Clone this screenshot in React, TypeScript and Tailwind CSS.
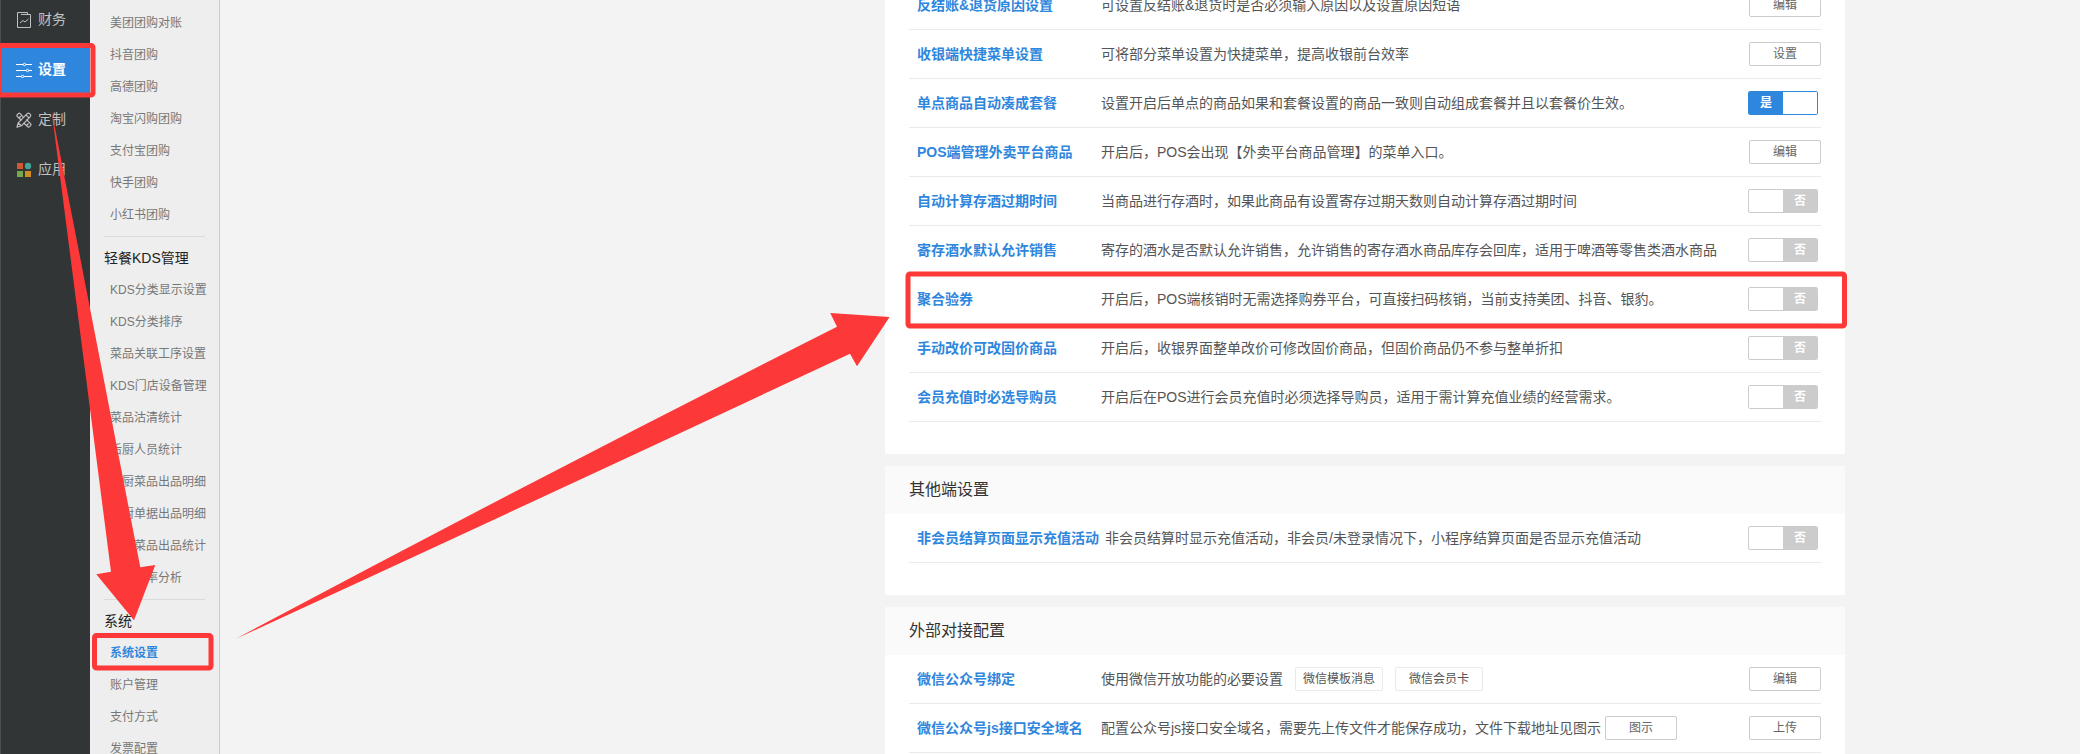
import type { ReactNode } from 'react';

type NavItem = { label: string; icon: ReactNode; active?: boolean };
type MenuGroup = { title?: string; items: string[] };
type Setting = {
  name: string;
  desc: string;
  action?: string;
  on?: boolean;
  tags?: string[];
  inlineAction?: string;
};
type Section = { title?: string; settings: Setting[] };

const navItems: NavItem[] = [
  {
    label: '财务',
    icon: (
      <svg viewBox="0 -1 16 18" className="w-4 h-[18px]" fill="none" stroke="currentColor">
        <path d="M11.5 3.5V1.5h-10v15h13V3.5H5" />
        <path d="M4 12l3-2.5 2 1.5 3.5-3" />
      </svg>
    ),
  },
  {
    label: '设置',
    active: true,
    icon: (
      <svg viewBox="0 -1 16 18" className="w-4 h-[18px]" fill="none" stroke="currentColor">
        <path d="M0 3.5h7M10 3.5h6M0 9.5h10M13 9.5h3M0 15.5h5M8 15.5h8" />
        <circle cx="8.5" cy="3.5" r="1.2" />
        <circle cx="11.5" cy="9.5" r="1.2" />
        <circle cx="6.5" cy="15.5" r="1.2" />
      </svg>
    ),
  },
  {
    label: '定制',
    icon: (
      <svg
        viewBox="0 -1 16 18"
        className="w-4 h-[18px]"
        fill="none"
        stroke="currentColor"
        strokeWidth="1.2"
        strokeLinejoin="round"
        strokeLinecap="round"
      >
        <path d="M7.2 6.2L4.2 2.6Q3.3 1.8 2.4 2.6L1.3 3.7Q.6 4.6 1.4 5.5L5 9M10.8 8.8l3.9 4q.6.8 0 1.6l-1.2 1.3q-.9.7-1.7 0L8 12.2M3.2 6.8l1.4-1.3M11 14l1.3-1.2" />
        <path d="M1 16.2l1.2-4.4L11.2 2.6q1.2-1 2.3 0l.8.8q.9 1.1 0 2.2L5.4 14.8zM2.4 12l2.8 2.7M10 3.9l3 3" />
      </svg>
    ),
  },
  {
    label: '应用',
    icon: (
      <svg viewBox="0 -1 16 18" className="w-4 h-[18px]">
        <rect x="1" y="2" width="6" height="6" fill="#d4572f" />
        <circle cx="12" cy="5" r="3.2" fill="#45a596" />
        <rect x="1" y="10" width="6" height="6" fill="#74aa48" />
        <rect x="9" y="10" width="6" height="6" fill="#d18c24" />
      </svg>
    ),
  },
];

const menuGroups: MenuGroup[] = [
  {
    items: ['美团团购对账', '抖音团购', '高德团购', '淘宝闪购团购', '支付宝团购', '快手团购', '小红书团购'],
  },
  {
    title: '轻餐KDS管理',
    items: [
      'KDS分类显示设置',
      'KDS分类排序',
      '菜品关联工序设置',
      'KDS门店设备管理',
      '菜品沽清统计',
      '后厨人员统计',
      '后厨菜品出品明细',
      '后厨单据出品明细',
      '后厨菜品出品统计',
      '出品效率分析',
    ],
  },
  {
    title: '系统',
    items: ['系统设置', '账户管理', '支付方式', '发票配置'],
  },
];

const sections: Section[] = [
  {
    settings: [
      { name: '反结账&退货原因设置', desc: '可设置反结账&退货时是否必须输入原因以及设置原因短语', action: '编辑' },
      { name: '收银端快捷菜单设置', desc: '可将部分菜单设置为快捷菜单，提高收银前台效率', action: '设置' },
      { name: '单点商品自动凑成套餐', desc: '设置开启后单点的商品如果和套餐设置的商品一致则自动组成套餐并且以套餐价生效。', on: true },
      { name: 'POS端管理外卖平台商品', desc: '开启后，POS会出现【外卖平台商品管理】的菜单入口。', action: '编辑' },
      { name: '自动计算存酒过期时间', desc: '当商品进行存酒时，如果此商品有设置寄存过期天数则自动计算存酒过期时间', on: false },
      { name: '寄存酒水默认允许销售', desc: '寄存的酒水是否默认允许销售，允许销售的寄存酒水商品库存会回库，适用于啤酒等零售类酒水商品', on: false },
      { name: '聚合验券', desc: '开启后，POS端核销时无需选择购券平台，可直接扫码核销，当前支持美团、抖音、银豹。', on: false },
      { name: '手动改价可改固价商品', desc: '开启后，收银界面整单改价可修改固价商品，但固价商品仍不参与整单折扣', on: false },
      { name: '会员充值时必选导购员', desc: '开启后在POS进行会员充值时必须选择导购员，适用于需计算充值业绩的经营需求。', on: false },
    ],
  },
  {
    title: '其他端设置',
    settings: [
      { name: '非会员结算页面显示充值活动', desc: '非会员结算时显示充值活动，非会员/未登录情况下，小程序结算页面是否显示充值活动', on: false },
    ],
  },
  {
    title: '外部对接配置',
    settings: [
      { name: '微信公众号绑定', desc: '使用微信开放功能的必要设置', tags: ['微信模板消息', '微信会员卡'], action: '编辑' },
      { name: '微信公众号js接口安全域名', desc: '配置公众号js接口安全域名，需要先上传文件才能保存成功，文件下载地址见图示', inlineAction: '图示', action: '上传' },
    ],
  },
];

const ActionButton = ({ children }: { children: ReactNode }) => (
  <button
    type="button"
    className="w-[72px] h-6 shrink-0 rounded-xs border border-[#ccc] bg-white text-xs leading-[22px] text-[#666]"
  >
    {children}
  </button>
);

const Toggle = ({ name, on }: { name: string; on: boolean }) => (
  <label className="group relative flex w-[70px] h-6 shrink-0 mr-[3px] overflow-hidden rounded-xs border border-[#ccc] bg-white text-xs font-bold text-white leading-[22px] text-center cursor-pointer has-checked:border-[#2f86dd]">
    <input type="checkbox" defaultChecked={on} aria-label={name} className="sr-only" />
    <span className="flex-1 group-has-checked:bg-[#2f86dd]">{on ? '是' : ''}</span>
    <span className="flex-1 bg-[#ccc] group-has-checked:bg-white">{on ? '' : '否'}</span>
  </label>
);

const SettingRow = ({ setting }: { setting: Setting }) => (
  <li className="flex items-center h-[49px] pl-2 border-b border-[#eaeaea]">
    <a href="#" className="min-w-[178px] mr-1.5 font-bold text-[#2f86dd] whitespace-nowrap">
      {setting.name}
    </a>
    <span className="text-[#555] whitespace-nowrap">{setting.desc}</span>
    {setting.tags && (
      <div className="flex gap-3 ml-3">
        {setting.tags.map((tag) => (
          <button
            key={tag}
            type="button"
            className="w-[88px] h-6 rounded-xs border border-[#eaeaea] text-xs leading-[22px] text-[#555]"
          >
            {tag}
          </button>
        ))}
      </div>
    )}
    {setting.inlineAction && (
      <div className="flex ml-1">
        <ActionButton>{setting.inlineAction}</ActionButton>
      </div>
    )}
    <div className="flex ml-auto">
      {setting.action ? (
        <ActionButton>{setting.action}</ActionButton>
      ) : (
        <Toggle name={setting.name} on={Boolean(setting.on)} />
      )}
    </div>
  </li>
);

// Red boxes and arrows that walk the reader through the steps
const Annotations = () => (
  <svg
    width="2080"
    height="754"
    viewBox="0 0 2080 754"
    className="absolute top-0 left-0 max-w-none pointer-events-none"
    aria-hidden="true"
  >
    <g fill="none" stroke="#fc3838" strokeWidth="5">
      <rect x="-0.5" y="45.5" width="93.5" height="49.5" rx="2" />
      <rect x="94.5" y="635.5" width="116.5" height="32.5" rx="2" />
      <rect x="908" y="274" width="936.5" height="52" rx="2" />
    </g>
    <g fill="#fc3838">
      <path d="M51.5 110L140.3 567.3L155.3 565L134 620.3L96.3 574.3L111 571.7Z" />
      <path d="M236 638.7Q535 479 837 326.7L830.2 313L889.6 317L857 366.3L850 353.7Q544 497 236 638.7Z" />
    </g>
  </svg>
);

const App = () => {
  return (
    <div className="relative flex h-screen overflow-hidden bg-[#f3f3f3] text-sm font-['Liberation_Sans','Noto_Sans_CJK_SC',sans-serif]">
      {/* Primary nav */}
      <nav className="w-[90px] shrink-0 border-l border-[#4a4e50] bg-[#313536] -mt-1.5">
        {navItems.map((item) => (
          <a
            key={item.label}
            href="#"
            className={`flex items-center gap-1.5 h-[50px] pl-[15px] ${
              item.active ? 'bg-[#2f86dd] font-bold text-white' : 'text-[#c0c1c1]'
            }`}
          >
            {item.icon}
            {item.label}
          </a>
        ))}
      </nav>

      {/* Secondary menu */}
      <aside className="w-[130px] shrink-0 px-3.5 pt-[7px] border-r border-[#ccc] bg-[#eee]">
        {menuGroups.map((group, index) => (
          <div key={index} className={index > 0 ? 'mt-[5px] border-t border-[#dadada]' : ''}>
            {group.title && <h2 className="pt-[5px] leading-8 text-[#222]">{group.title}</h2>}
            <ul className="pl-1.5 text-xs whitespace-nowrap">
              {group.items.map((label) => (
                <li key={label}>
                  <a
                    href="#"
                    className={`block leading-8 ${label === '系统设置' ? 'font-bold text-[#2f86dd]' : 'text-[#777]'}`}
                  >
                    {label}
                  </a>
                </li>
              ))}
            </ul>
          </div>
        ))}
      </aside>

      {/* Settings */}
      <main className="flex flex-1 justify-center pl-[430px]">
        <div className="flex flex-col gap-3 w-full max-w-[960px] -mt-[19px]">
          {sections.map((section, index) => (
            <section key={index} className="shrink-0 rounded-xs bg-white pb-8">
              {section.title && (
                <h2 className="h-12 px-6 bg-[#fafafa] text-base leading-[48px] text-[#333]">{section.title}</h2>
              )}
              <ul className="px-6">
                {section.settings.map((setting) => (
                  <SettingRow key={setting.name} setting={setting} />
                ))}
              </ul>
            </section>
          ))}
        </div>
      </main>

      <Annotations />
    </div>
  );
};

export default App;
